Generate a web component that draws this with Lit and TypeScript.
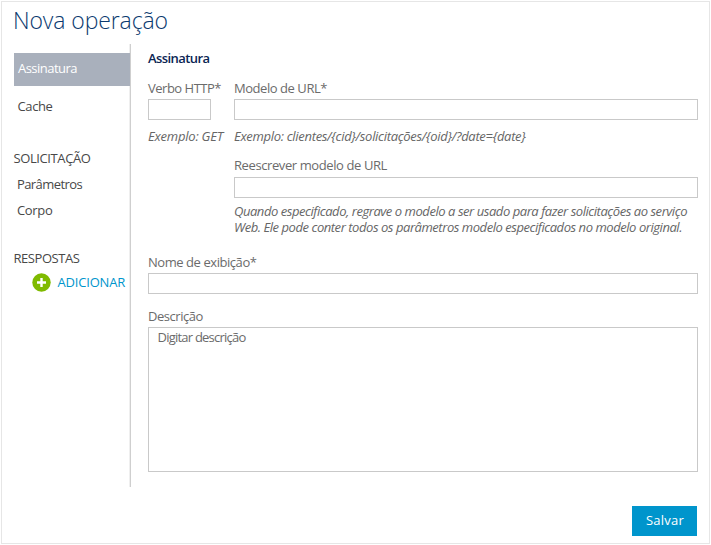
import { LitElement, html, css } from "lit";
import { customElement, property } from "lit/decorators.js";

/** A single line of text whose tracking is set so that it spans a given advance width. */
@customElement("fit-text")
class FitText extends LitElement {
  @property({ type: Number }) width = 0;
  @property() text = "";

  static styles = css`
    :host { display: block; white-space: nowrap; }
    .run { display: inline-block; white-space: pre; }
  `;

  firstUpdated() {
    const run = this.renderRoot.querySelector(".run") as HTMLElement;
    const natural = run.getBoundingClientRect().width;
    run.style.letterSpacing = `${(this.width - natural) / this.text.length}px`;
  }

  render() {
    return html`<span class="run">${this.text}</span>`;
  }
}

@customElement("app-root")
class AppRoot extends LitElement {
  static styles = css`
    :host {
      display: block;
      width: 711px;
      height: 545px;
      overflow: hidden;
      background: #fff;
      font: 13px/18px "Open Sans", "Noto Sans", sans-serif;
      font-stretch: 94%;
      color: #6b6b6b;
    }
    * { box-sizing: border-box; }
    .frame {
      display: flex;
      flex-direction: column;
      width: 709px;
      height: 543px;
      margin: 1px;
      border: 1px solid #e6e6e6;
    }
    .frame-wrap { display: flex; }
    .title {
      height: 42px;
      margin: 0;
      padding: 1px 0 0 11px;
      font: 300 23px/34px "Open Sans", "Noto Sans", sans-serif;
      font-stretch: 96%;
      color: #0b3a6f;
    }
    .body { display: flex; height: 443px; padding-left: 12px; }
    .nav {
      width: 117px;
      padding-top: 9px;
      border-right: 1px solid #cfcfcf;
      box-shadow: inset -1px 0 #efefef;
      color: #484848;
    }
    .tab { height: 33px; padding: 6px 0 0 4px; background: #a9b0bc; color: #fff; }
    .item { padding-left: 3px; height: 26px; }
    .cache { margin-top: 11px; height: 52px; padding-left: 3.5px; }
    .corpo { height: 48px; }
    .group { height: 26px; margin-left: -0.5px; }
    .responses { height: 24px; }
    .add { display: flex; align-items: center; padding-left: 18px; color: #0095cc; }
    .add svg { width: 19px; height: 19px; margin-right: 6.5px; }
    .add fit-text { margin-top: -1px; }
    .form { width: 550px; margin-left: 17px; padding-top: 5px; }
    .heading {
      margin: 0 0 12px;
      font: 600 13px/18px "Open Sans", "Noto Sans", sans-serif;
      font-stretch: 94%;
      color: #0a2553;
    }
    .row { display: grid; grid-template-columns: 63px 464px; column-gap: 23px; }
    .box {
      display: block;
      height: 21px;
      margin-top: 2px;
      border: 1px solid #c9c9c9;
      background: #fff;
    }
    .hint { margin-top: 7px; font-style: italic; color: #666; }
    .second { padding: 11px 0 0 86px; }
    .second .box { margin-top: 3px; }
    .second .hint { margin-top: 5px; line-height: 16px; }
    .name { margin-top: 18px; }
    .desc { margin-top: 13px; }
    .area { height: 145px; padding: 0 8.5px; }
    .footer { display: flex; justify-content: flex-end; padding: 19px 12px 0 0; }
    .save {
      width: 65px;
      height: 30px;
      padding: 5px 0 0 14px;
      background: #0095cc;
      color: #fff;
    }
  `;

  private line(text: string, width: number) {
    return html`<fit-text .text=${text} .width=${width}></fit-text>`;
  }

  render() {
    return html`
      <div class="frame-wrap">
        <div class="frame">
          <h1 class="title">${this.line("Nova operação", 155)}</h1>
          <div class="body">
            <nav class="nav">
              <div class="tab">${this.line("Assinatura", 59)}</div>
              <div class="item cache">${this.line("Cache", 35)}</div>
              <div class="group">${this.line("SOLICITAÇÃO", 77)}</div>
              <div class="item">${this.line("Parâmetros", 65)}</div>
              <div class="item corpo">${this.line("Corpo", 35.5)}</div>
              <div class="group responses">${this.line("RESPOSTAS", 66)}</div>
              <div class="add">
                <svg viewBox="0 0 19 19">
                  <circle cx="9.5" cy="9.5" r="9.2" fill="#7fba00" />
                  <path d="M5 9.5H14M9.5 5V14" stroke="#fff" stroke-width="2.4" />
                </svg>
                ${this.line("ADICIONAR", 67.5)}
              </div>
            </nav>
            <main class="form">
              <h2 class="heading">${this.line("Assinatura", 61.5)}</h2>
              <div class="row">
                <div>
                  ${this.line("Verbo HTTP*", 73)}
                  <div class="box"></div>
                  <div class="hint">${this.line("Exemplo: GET", 75)}</div>
                </div>
                <div>
                  ${this.line("Modelo de URL*", 93)}
                  <div class="box"></div>
                  <div class="hint">
                    ${this.line("Exemplo: clientes/{cid}/solicitações/{oid}/?date={date}", 291.5)}
                  </div>
                </div>
              </div>
              <div class="second">
                ${this.line("Reescrever modelo de URL", 153)}
                <div class="box"></div>
                <div class="hint">
                  ${this.line("Quando especificado, regrave o modelo a ser usado para fazer solicitações ao serviço", 453)}
                  ${this.line("Web. Ele pode conter todos os parâmetros modelo especificados no modelo original.", 448)}
                </div>
              </div>
              <div class="name">
                ${this.line("Nome de exibição*", 108.5)}
                <div class="box"></div>
              </div>
              <div class="desc">
                ${this.line("Descrição", 55)}
                <div class="box area">${this.line("Digitar descrição", 88)}</div>
              </div>
            </main>
          </div>
          <div class="footer">
            <div class="save">${this.line("Salvar", 38)}</div>
          </div>
        </div>
      </div>
    `;
  }
}
